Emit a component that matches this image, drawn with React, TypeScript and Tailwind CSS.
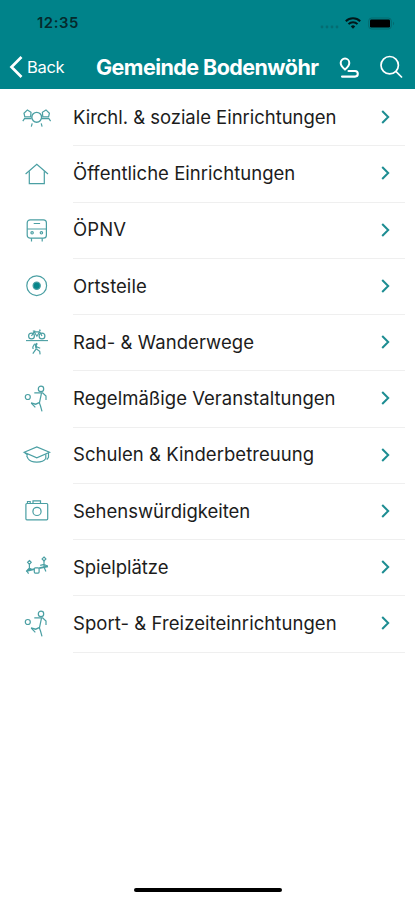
import type { ReactNode } from "react";

function PeopleIcon() {
  return (
    <>
      <circle cx="14.7" cy="14.3" r="4.9" strokeWidth="1.4" />
      <path d="M10.2 20.3l-.9 3.3M19.2 20.3l.9 3.3" />
      <path d="M8.6 13.8H2.8L2 10.2l3.4-3.300 3.600 2.300z" />
      <path d="M20.800 13.800h5.800l.8-3.600-3.400-3.300-3.600 2.300z" />
      <path d="M.8 18.2l1.700-2.500h7M28.600 18.200l-1.700-2.500h-7" />
    </>
  );
}

function HouseIcon() {
  return (
    <>
      <path d="M3.6 15L14.8 5.3 26 15" />
      <path d="M7.3 12.3v12.3h15V12.3" />
    </>
  );
}

function BusIcon() {
  return (
    <>
      <rect x="5.2" y="4.8" width="19.2" height="18.4" rx="3" />
      <path d="M5.2 14h19.2M11.7 8.5h6.4M9.5 23.2v3.4M20.2 23.2v3.4" />
      <circle cx="10.1" cy="17.8" r="1.2" />
      <circle cx="19.4" cy="17.8" r="1.2" />
    </>
  );
}

function TargetIcon() {
  return (
    <>
      <circle cx="14.7" cy="14.7" r="9.9" />
      <circle cx="14.7" cy="14.7" r="3.6" fill="#07858a" />
    </>
  );
}

function BikeHikeIcon() {
  return (
    <>
      <circle cx="9.5" cy="8" r="2.9" />
      <circle cx="20" cy="8" r="2.9" />
      <path d="M9.5 8l2.6-4.2h5.6L20 8M12.1 3.8l2.8 4.4 2.8-4.4M10.8 3h2.5M17 2.2l1.7.2" />
      <path d="M4 12.6h22" strokeWidth="1.1" />
      <path d="M15 15.3l-1.2 1.8.6 3.6" strokeWidth="2" />
      <path d="M14 18.5l4.2 1.8M14.4 21l3.3 2.3.4 3M14 21.2l-3.2 4.5" />
      <path d="M12.7 15.8l-1.9 3.2.3 2" />
    </>
  );
}

function SoccerIcon() {
  return (
    <>
      <circle cx="19" cy="4.9" r="2.7" />
      <circle cx="5.8" cy="13" r="2.5" />
      <path d="M12.3 8.8h8.3l3.4 3.3v4" />
      <path d="M19.5 9.2L17.4 19l1.1 3 1.5 5.3" />
      <path d="M17.2 18.6l-3.5 1.6-4.7-1.2" strokeWidth="1.3" />
      <path d="M9.3 19.2l4 4.1" />
    </>
  );
}

function GraduationIcon() {
  return (
    <>
      <path d="M2.2 12.3L14.8 6.9l12.7 5.4-12.7 5.5z" />
      <path d="M4.5 15.5l1.5 3c3 4.8 14.7 4.8 17.8 0v-4.3" />
      <path d="M26.5 12.8v4.6l-1.7 2.2M2.8 12.7l3.2 2.6" />
    </>
  );
}

function CameraIcon() {
  return (
    <>
      <rect x="3.9" y="7.5" width="21.8" height="16.3" rx="1" />
      <path d="M11 7.5V4.8h7.5v2.7M5.5 7.5v-2h2.7v2" />
      <circle cx="15" cy="15.4" r="4.1" />
    </>
  );
}

function SeesawIcon() {
  return (
    <>
      <path d="M7.4 7.5l1.8 1.8-1.8 2-1.8-2zM22 4l1.9 1.9-1.9 2-1.9-2z" />
      <path d="M7.4 11.3v6.2M4.2 18.5l3.2-3.6 2.5 1.5M22 8v6.4M18.2 12.4l3.8-1 3.8 1.8" />
      <path d="M5 17.8l7.3-1.6M17.2 15.2l8.8-1.9" strokeWidth="1.7" />
      <rect x="12.3" y="14.8" width="4.8" height="5.3" rx="1" />
      <path d="M4.7 18l1.9 2.6M22.2 14.5l1.7 4" />
    </>
  );
}

type Category = {
  label: string;
  icon: ReactNode;
  tracking: string;
};

const categories: Category[] = [
  { label: "Kirchl. & soziale Einrichtungen", icon: <PeopleIcon />, tracking: "tracking-[-0.03px]" },
  { label: "Öffentliche Einrichtungen", icon: <HouseIcon />, tracking: "tracking-[0.03px]" },
  { label: "ÖPNV", icon: <BusIcon />, tracking: "tracking-[0.1px]" },
  { label: "Ortsteile", icon: <TargetIcon />, tracking: "tracking-[0.03px]" },
  { label: "Rad- & Wanderwege", icon: <BikeHikeIcon />, tracking: "tracking-[0.07px]" },
  { label: "Regelmäßige Veranstaltungen", icon: <SoccerIcon />, tracking: "tracking-[0.03px]" },
  { label: "Schulen & Kinderbetreuung", icon: <GraduationIcon />, tracking: "tracking-[0.04px]" },
  { label: "Sehenswürdigkeiten", icon: <CameraIcon />, tracking: "tracking-[-0.02px]" },
  { label: "Spielplätze", icon: <SeesawIcon />, tracking: "tracking-[-0.05px]" },
  { label: "Sport- & Freizeiteinrichtungen", icon: <SoccerIcon />, tracking: "tracking-[0.06px]" },
];

function StatusBar() {
  return (
    <div className="flex h-[46px] items-center pl-[37px] pr-[20px] text-[#052a2c]">
      <span className="text-[14.8px] font-semibold tracking-[0.6px]">12:35</span>
      <div className="ml-auto flex items-center">
        <svg className="mt-[7px] h-[4px] w-[20px]" viewBox="0 0 20 4" fill="#046c72">
          <circle cx="2" cy="2" r="1.4" />
          <circle cx="7" cy="2" r="1.4" />
          <circle cx="12" cy="2" r="1.4" />
          <circle cx="17" cy="2" r="1.4" />
        </svg>
        <svg className="ml-[5px] h-[12px] w-[16px]" viewBox="0 0 16 12" fill="none" stroke="#021719" strokeWidth="2">
          <path d="M.8 4.3a10.2 10.2 0 0 1 14.4 0M3.5 7.1a6.4 6.4 0 0 1 9 0" />
          <path d="M8 11.7L5.8 9.4a3.1 3.1 0 0 1 4.4 0z" fill="#021719" stroke="none" />
        </svg>
        <svg className="ml-[7px] h-[13px] w-[27px]" viewBox="0 0 27 13" fill="none">
          <rect x="0.7" y="1" width="22.6" height="11" rx="3" stroke="#046a6f" />
          <rect x="2" y="2.5" width="20" height="8" rx="1.2" fill="#000" />
          <path d="M25 4.7c1.5.8 1.5 2.8 0 3.6z" fill="#046a6f" />
        </svg>
      </div>
    </div>
  );
}

function NavBar() {
  return (
    <div className="flex h-[42px] items-center pl-[9px] pr-[12px] text-white">
      <button className="flex items-center">
        <svg className="h-[22px] w-[14px]" viewBox="0 0 14 22" fill="none" stroke="currentColor" strokeWidth="2.7">
          <path d="M12.5 1L2.5 11l10 10" />
        </svg>
        <span className="ml-[4px] w-[69px] text-left text-[16.5px] tracking-[-0.3px]">Back</span>
      </button>
      <h1 className="whitespace-nowrap text-[21.5px] font-bold tracking-[-0.56px]">Gemeinde Bodenwöhr</h1>
      <div className="ml-auto flex items-center gap-[21px]">
        <svg className="mt-[2px] h-[22px] w-[20px]" viewBox="0 0 20 22" fill="none" stroke="currentColor" strokeWidth="2">
          <path d="M6 12.5C3.5 10.3 1.7 8.5 1.7 5.9a4.3 4.3 0 0 1 8.6 0C10.3 8.5 8.5 10.3 6 12.5z" />
          <path d="M9.5 14H16a2.8 2.8 0 0 1 0 5.6H3" strokeWidth="2.1" strokeLinecap="round" />
        </svg>
        <svg className="h-[24px] w-[23px]" viewBox="0 0 23 24" fill="none" stroke="currentColor" strokeWidth="1.7">
          <circle cx="9.7" cy="10.2" r="8.7" />
          <path d="M15.9 16.4l6.1 6.1" />
        </svg>
      </div>
    </div>
  );
}

function CategoryRow({ category }: { category: Category }) {
  return (
    <li className="flex h-[56.25px] items-stretch pl-[22px] pr-[10px]">
      <svg
        className="mr-[21px] mt-[12.5px] h-[30px] w-[30px] shrink-0"
        viewBox="0 0 30 30"
        fill="none"
        stroke="#4a9fa3"
        strokeWidth="1.2"
      >
        {category.icon}
      </svg>
      <div className="flex flex-1 items-center border-b border-[#efefef] pr-[15px]">
        <span className={`whitespace-nowrap text-[18.5px] text-[#1c1c1c] ${category.tracking}`}>
          {category.label}
        </span>
        <svg
          className="mb-px ml-auto h-[14px] w-[9px]"
          viewBox="0 0 9 14"
          fill="none"
          stroke="#1d8d92"
          strokeWidth="2"
        >
          <path d="M1.2 1l6 6-6 6" />
        </svg>
      </div>
    </li>
  );
}

export default function App() {
  return (
    <div className="flex h-[900px] w-[415px] flex-col overflow-hidden bg-white font-['Inter',sans-serif]">
      <header className="h-[88.5px] shrink-0 bg-[#00838a]">
        <StatusBar />
        <NavBar />
      </header>
      <ul className="pt-[1.5px]">
        {categories.map((category) => (
          <CategoryRow key={category.label} category={category} />
        ))}
      </ul>
      <div className="mx-auto mb-[8px] mt-auto h-[4px] w-[148px] rounded-full bg-black" />
    </div>
  );
}
